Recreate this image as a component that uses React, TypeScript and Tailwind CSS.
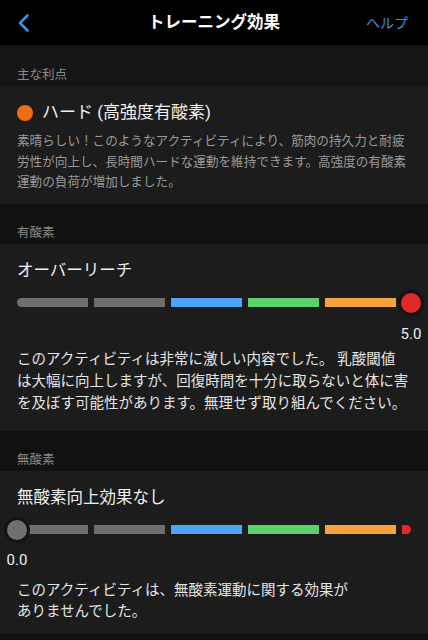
import React from 'react'

const font = { fontFamily: 'Roboto, "Noto Sans CJK JP", sans-serif' }

const segColors = ['bg-[#6f6f6f]', 'bg-[#6f6f6f]', 'bg-[#4ea4f6]', 'bg-[#5dd06e]', 'bg-[#f8a23b]']

function SectionHeader({ label, first }: { label: string; first?: boolean }) {
  return (
    <div
      className={`flex items-end px-[17px] pb-[3px] ${first ? 'h-[41px] bg-[#151515]' : 'h-[40px] bg-[#111111]'}`}
    >
      <span className="text-[12.5px] leading-[16px] text-[#8a8a8a]">{label}</span>
    </div>
  )
}

function Track({ at }: { at: 'start' | 'end' }) {
  const thumbColor = at === 'end' ? 'bg-[#e2282c]' : 'bg-[#707070]'
  return (
    <div className="relative h-[22px]">
      <div className="flex h-full items-center gap-[6px]">
        {segColors.map((c, i) => (
          <div key={i} className={`h-[9px] w-[71px] ${c} ${i === 0 ? 'rounded-l-full' : ''}`} />
        ))}
        <div className="h-[9px] w-[9px] rounded-r-full bg-[#e2282c]" />
      </div>
      <div
        className={`absolute top-1/2 h-[26px] w-[26px] -translate-y-1/2 rounded-full border-[3px] border-[#141414] ${thumbColor} ${at === 'end' ? 'right-[-13px]' : 'left-[-13px]'}`}
      />
    </div>
  )
}

export default function App() {
  return (
    <div className="h-[640px] w-[428px] overflow-hidden bg-[#111111]" style={font}>
      {/* Header */}
      <header className="grid h-[45px] grid-cols-[1fr_auto_1fr] items-center bg-black px-[16px]">
        <svg width="14" height="20" viewBox="0 0 14 20" fill="none">
          <path d="M11.5 2.5 L4 10 L11.5 17.5" stroke="#3f8fe2" strokeWidth="2.6" strokeLinecap="round" strokeLinejoin="round" />
        </svg>
        <h1 className="pt-[2px] text-[16.5px] font-bold text-white">トレーニング効果</h1>
        <span className="justify-self-end pr-[4px] pt-[2px] text-[14px] text-[#3f8fe2]">ヘルプ</span>
      </header>

      <SectionHeader label="主な利点" first />

      <section className="bg-[#1c1c1c] px-[17px] pt-[15px] pb-[11px]">
        <div className="flex h-[24px] items-center">
          <span className="h-[16px] w-[16px] rounded-full bg-[#ee6c12]" />
          <span className="ml-[9px] text-[17px] text-[#f0f0f0]">ハード (高強度有酸素)</span>
        </div>
        <p className="mt-[6px] whitespace-nowrap text-[12.6px] leading-[20.5px] text-[#9a9a9a]">
          素晴らしい！このようなアクティビティにより、筋肉の持久力と耐疲
          <br />
          労性が向上し、長時間ハードな運動を維持できます。高強度の有酸素
          <br />
          運動の負荷が増加しました。
        </p>
      </section>

      <SectionHeader label="有酸素" />

      <section className="bg-[#1c1c1c] px-[17px] pt-[15px] pb-[16px]">
        <h2 className="text-[16.5px] leading-[24px] text-[#f0f0f0]">オーバーリーチ</h2>
        <div className="mt-[9px]">
          <Track at="end" />
        </div>
        <div className="mt-[10px] flex justify-end">
          <span className="mr-[-11px] w-[22px] text-center text-[15px] leading-[20px] text-[#eeeeee]">5.0</span>
        </div>
        <p className="mt-[5px] whitespace-nowrap text-[14.5px] leading-[22px] text-[#e6e6e6]">
          このアクティビティは非常に激しい内容でした。 乳酸閾値
          <br />
          は大幅に向上しますが、回復時間を十分に取らないと体に害
          <br />
          を及ぼす可能性があります。無理せず取り組んでください。
        </p>
      </section>

      <SectionHeader label="無酸素" />

      <section className="bg-[#1c1c1c] px-[17px] pt-[15px] pb-[11px]">
        <h2 className="text-[16.5px] leading-[24px] text-[#f0f0f0]">無酸素向上効果なし</h2>
        <div className="mt-[9px]">
          <Track at="start" />
        </div>
        <div className="mt-[9px] flex">
          <span className="ml-[-11px] w-[22px] text-center text-[15px] leading-[20px] text-[#eeeeee]">0.0</span>
        </div>
        <p className="mt-[10px] whitespace-nowrap text-[14.5px] leading-[21.5px] text-[#e6e6e6]">
          このアクティビティは、無酸素運動に関する効果が
          <br />
          ありませんでした。
        </p>
      </section>
    </div>
  )
}
